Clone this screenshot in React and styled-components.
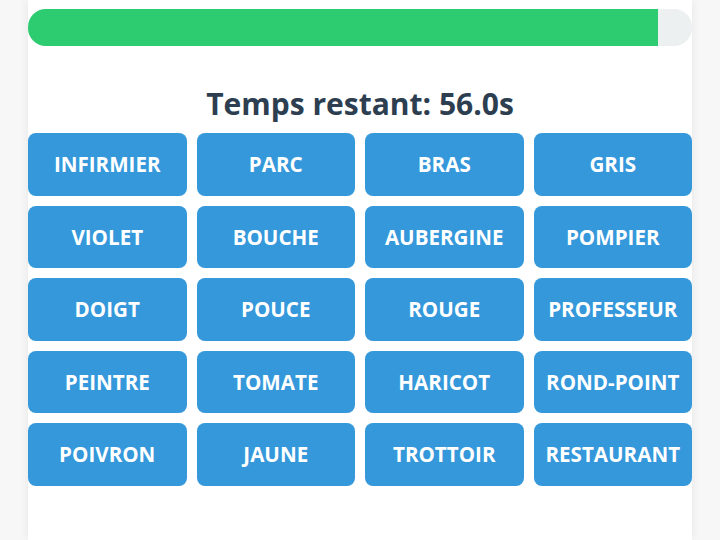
import React from 'react'
import styled, { createGlobalStyle } from 'styled-components'

const GlobalStyle = createGlobalStyle`
  body {
    margin: 0;
    background: #f7f7f7;
    font-family: 'Open Sans', 'Noto Sans', sans-serif;
  }
`

const words = [
  'INFIRMIER', 'PARC', 'BRAS', 'GRIS',
  'VIOLET', 'BOUCHE', 'AUBERGINE', 'POMPIER',
  'DOIGT', 'POUCE', 'ROUGE', 'PROFESSEUR',
  'PEINTRE', 'TOMATE', 'HARICOT', 'ROND-POINT',
  'POIVRON', 'JAUNE', 'TROTTOIR', 'RESTAURANT',
]

const App = () => {
  const remaining = 56.0
  const progress = 94.9
  return (
    <>
      <GlobalStyle />
      <Card>
        <Track>
          <Fill style={{ width: progress + '%' }} />
        </Track>
        <Timer>Temps restant: {remaining.toFixed(1)}s</Timer>
        <Grid>
          {words.map((w) => (
            <WordButton key={w}>{w}</WordButton>
          ))}
        </Grid>
      </Card>
    </>
  )
}

export default App

const Card = styled.div`
  width: 664px;
  min-height: 540px;
  margin: 0 auto;
  padding-top: 9px;
  box-sizing: border-box;
  background: #fff;
  box-shadow: 0 0 10px rgba(0, 0, 0, 0.07);
`

const Track = styled.div`
  height: 37px;
  border-radius: 18px;
  background: #ecf0f1;
  overflow: hidden;
`

const Fill = styled.div`
  height: 100%;
  background: #2ecc71;
`

const Timer = styled.h2`
  margin: 39px 0 11px;
  font-size: 30px;
  line-height: 37px;
  font-weight: 700;
  color: #2c3e50;
  text-align: center;
`

const Grid = styled.div`
  display: grid;
  grid-template-columns: repeat(4, 1fr);
  gap: 10px;
`

const WordButton = styled.button`
  height: 62.5px;
  padding: 0 4px;
  border: none;
  border-radius: 8px;
  background: #3498db;
  color: #fff;
  font-family: 'Open Sans', 'Noto Sans', sans-serif;
  font-size: 20.6px;
  font-weight: 700;
  cursor: pointer;
`
